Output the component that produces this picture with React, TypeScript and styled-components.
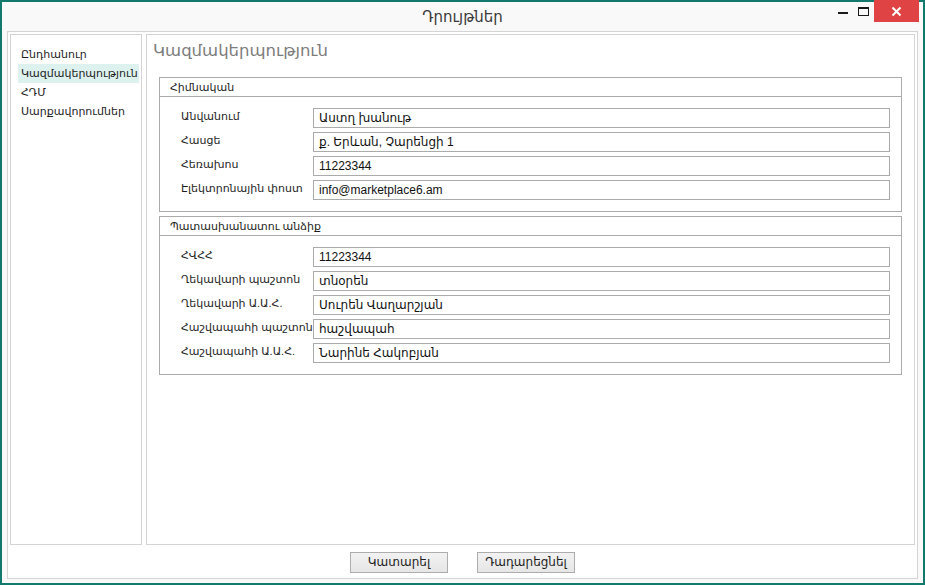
import styled, { createGlobalStyle } from 'styled-components';

const GlobalStyle = createGlobalStyle`
  html, body {
    margin: 0;
    padding: 0;
    background: #ffffff;
  }
  * {
    box-sizing: border-box;
  }
  body {
    font-family: "Liberation Sans", "DejaVu Sans", sans-serif;
    font-size: 12px;
    color: #1e1e1e;
  }
`;

const Window = styled.div`
  width: 925px;
  height: 585px;
  border: 2px solid #127a6c;
  background: #f9f9f9;
  display: flex;
  flex-direction: column;
`;

const TitleBar = styled.div`
  height: 29px;
  display: grid;
  grid-template-columns: 1fr auto 1fr;
  align-items: start;
`;

const Title = styled.div`
  grid-column: 2;
  padding-top: 5px;
  font-size: 15px;
  line-height: 20px;
  color: #3a3a3a;
`;

const Controls = styled.div`
  grid-column: 3;
  justify-self: end;
  display: flex;
  align-items: flex-start;
  margin-top: -2px;
  margin-right: 4px;
`;

const CtrlButton = styled.div<{ $close?: boolean }>`
  width: ${(p) => (p.$close ? '45px' : '21px')};
  height: 22px;
  display: flex;
  align-items: center;
  justify-content: center;
  background: ${(p) => (p.$close ? '#e04343' : 'transparent')};
`;

const MinGlyph = styled.div`
  width: 10px;
  height: 2px;
  margin-top: 4px;
  background: #1a1a1a;
`;

const MaxGlyph = styled.div`
  width: 11px;
  height: 9px;
  border: 1px solid #1a1a1a;
  border-top-width: 2px;
  margin-top: 1px;
`;

const Body = styled.div`
  flex: 1;
  padding: 0 5px 4px 5px;
  display: flex;
`;

const Frame = styled.div`
  flex: 1;
  border: 1px solid #d4d4d4;
  background: #ffffff;
  padding: 2px 2px 0 2px;
  display: flex;
  flex-direction: column;
`;

const Panels = styled.div`
  height: 511px;
  display: flex;
  gap: 4px;
`;

const NavPanel = styled.div`
  width: 132px;
  border: 1px solid #d4d4d4;
  padding: 10px 2px 0 7px;
  display: flex;
  flex-direction: column;
`;

const NavItem = styled.div<{ $active?: boolean }>`
  height: 19px;
  line-height: 19px;
  padding-left: 3px;
  font-size: 11px;
  white-space: nowrap;
  color: #1e1e1e;
  background: ${(p) => (p.$active ? '#ddf1ee' : 'transparent')};
`;

const ContentPanel = styled.div`
  flex: 1;
  border: 1px solid #d4d4d4;
  padding: 3px 12px 0 12px;
  display: flex;
  flex-direction: column;
`;

const Heading = styled.div`
  margin-left: -6px;
  font-size: 16.5px;
  line-height: 24px;
  color: #7c7c7c;
  margin-bottom: 15px;
`;

const Group = styled.div`
  border: 1px solid #ababab;
  margin-bottom: 4px;
`;

const GroupHeader = styled.div`
  height: 19px;
  line-height: 18px;
  border-bottom: 1px solid #ababab;
  padding-left: 10px;
  font-size: 11px;
  color: #1e1e1e;
`;

const GroupBody = styled.div`
  padding: 11px 11px 11px 21px;
  display: flex;
  flex-direction: column;
  gap: 4px;
`;

const Row = styled.div`
  display: flex;
  align-items: center;
  height: 20px;
`;

const Label = styled.div`
  width: 132px;
  white-space: nowrap;
  margin-top: -4px;
  font-size: 11px;
  color: #1e1e1e;
`;

const Field = styled.div`
  flex: 1;
  height: 20px;
  border: 1px solid #ababab;
  padding-left: 5px;
  line-height: 18px;
  color: #111;
  white-space: nowrap;
`;

const Footer = styled.div`
  flex: 1;
  display: flex;
  justify-content: center;
  align-items: flex-start;
  gap: 29px;
  padding-top: 7px;
`;

const Button = styled.div`
  width: 98px;
  height: 21px;
  border: 1px solid #adadad;
  background: linear-gradient(#f2f2f2, #e6e6e6);
  text-align: center;
  line-height: 19px;
  font-size: 12px;
  color: #1e1e1e;
`;

const basic = [
  ['Անվանում', 'Աստղ խանութ'],
  ['Հասցե', 'ք. Երևան, Չարենցի 1'],
  ['Հեռախոս', '11223344'],
  ['Էլեկտրոնային փոստ', 'info@marketplace6.am'],
];

const responsible = [
  ['ՀՎՀՀ', '11223344'],
  ['Ղեկավարի պաշտոն', 'տնօրեն'],
  ['Ղեկավարի Ա.Ա.Հ.', 'Սուրեն Վաղարշյան'],
  ['Հաշվապահի պաշտոն', 'հաշվապահ'],
  ['Հաշվապահի Ա.Ա.Հ.', 'Նարինե Հակոբյան'],
];

const nav = ['Ընդհանուր', 'Կազմակերպություն', 'ՀԴՄ', 'Սարքավորումներ'];

function FieldGroup({ title, rows }: { title: string; rows: string[][] }) {
  return (
    <Group>
      <GroupHeader>{title}</GroupHeader>
      <GroupBody>
        {rows.map(([label, value]) => (
          <Row key={label}>
            <Label>{label}</Label>
            <Field>{value}</Field>
          </Row>
        ))}
      </GroupBody>
    </Group>
  );
}

export default function App() {
  return (
    <>
      <GlobalStyle />
      <Window>
        <TitleBar>
          <Title>Դրույթներ</Title>
          <Controls>
            <CtrlButton>
              <MinGlyph />
            </CtrlButton>
            <CtrlButton>
              <MaxGlyph />
            </CtrlButton>
            <CtrlButton $close>
              <svg width="11" height="11" viewBox="0 0 11 11">
                <path d="M1.5 1.5 L9.5 9.5 M9.5 1.5 L1.5 9.5" stroke="#fff" strokeWidth="2" />
              </svg>
            </CtrlButton>
          </Controls>
        </TitleBar>
        <Body>
          <Frame>
            <Panels>
              <NavPanel>
                {nav.map((n) => (
                  <NavItem key={n} $active={n === 'Կազմակերպություն'}>
                    {n}
                  </NavItem>
                ))}
              </NavPanel>
              <ContentPanel>
                <Heading>Կազմակերպություն</Heading>
                <FieldGroup title="Հիմնական" rows={basic} />
                <FieldGroup title="Պատասխանատու անձիք" rows={responsible} />
              </ContentPanel>
            </Panels>
            <Footer>
              <Button>Կատարել</Button>
              <Button>Դադարեցնել</Button>
            </Footer>
          </Frame>
        </Body>
      </Window>
    </>
  );
}
